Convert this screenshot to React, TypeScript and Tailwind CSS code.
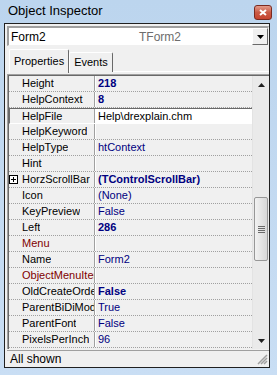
import React from "react"

type Row = {
  name: string
  value?: string
  bold?: boolean
  ref?: boolean
  selected?: boolean
  expandable?: boolean
}

const rows: Row[] = [
  { name: "Height", value: "218", bold: true },
  { name: "HelpContext", value: "8", bold: true },
  { name: "HelpFile", value: "Help\\drexplain.chm", selected: true },
  { name: "HelpKeyword" },
  { name: "HelpType", value: "htContext" },
  { name: "Hint" },
  { name: "HorzScrollBar", value: "(TControlScrollBar)", bold: true, expandable: true },
  { name: "Icon", value: "(None)" },
  { name: "KeyPreview", value: "False" },
  { name: "Left", value: "286", bold: true },
  { name: "Menu", ref: true },
  { name: "Name", value: "Form2" },
  { name: "ObjectMenuItem", ref: true },
  { name: "OldCreateOrder", value: "False", bold: true },
  { name: "ParentBiDiMode", value: "True" },
  { name: "ParentFont", value: "False" },
  { name: "PixelsPerInch", value: "96" },
]

function PropRow({ row }: { row: Row }) {
  if (row.selected) {
    return (
      <div className="flex h-[16px] border-t border-t-[#696969] border-b border-b-white border-l border-l-[#696969]">
        <div className="flex w-[85px] shrink-0 items-center overflow-hidden whitespace-nowrap border-r border-r-[#a0a0a0] pl-[12px] text-black">
          {row.name}
        </div>
        <div className="flex flex-1 items-center overflow-hidden whitespace-nowrap border-l border-l-white bg-white pl-[2px] text-black">
          {row.value}
        </div>
      </div>
    )
  }
  return (
    <div className="flex h-[16px] border-b border-dotted border-b-[#a0a0a0]">
      <div
        className={`flex w-[86px] shrink-0 items-center overflow-hidden whitespace-nowrap border-r border-r-[#a0a0a0] ${
          row.ref ? "text-[#800000]" : "text-black"
        }`}
      >
        <div className="flex w-[13px] shrink-0 items-center">
          {row.expandable && (
            <div className="flex h-[9px] w-[9px] items-center justify-center border border-black bg-white">
              <svg width="7" height="7" viewBox="0 0 7 7">
                <path d="M1 3.5h5M3.5 1v5" stroke="black" strokeWidth="1" />
              </svg>
            </div>
          )}
        </div>
        <span className="overflow-hidden">{row.name}</span>
      </div>
      <div
        className={`flex flex-1 items-center overflow-hidden whitespace-nowrap border-l border-l-white pl-[2px] text-[#000080] ${
          row.bold ? "font-bold" : ""
        }`}
      >
        {row.value}
      </div>
    </div>
  )
}

function ScrollBar() {
  return (
    <div className="flex w-[17px] shrink-0 flex-col border-l border-l-[#e3e3e3] bg-[#eaeaea]">
      <div className="flex h-[17px] items-center justify-center">
        <svg width="7" height="4" viewBox="0 0 7 4">
          <path d="M3.5 0L7 4H0z" fill="#202020" />
        </svg>
      </div>
      <div className="h-[104px]" />
      <div className="mx-[1px] flex h-[64px] items-center justify-center rounded-[2px] border border-[#979797] bg-gradient-to-r from-[#f2f2f2] to-[#d8d8d8]">
        <div className="flex flex-col gap-[1px]">
          <div className="h-[1px] w-[7px] bg-[#6a6a6a]" />
          <div className="h-[1px] w-[7px] bg-[#6a6a6a]" />
          <div className="h-[1px] w-[7px] bg-[#6a6a6a]" />
          <div className="h-[1px] w-[7px] bg-[#6a6a6a]" />
        </div>
      </div>
      <div className="flex-1" />
      <div className="flex h-[17px] items-center justify-center">
        <svg width="7" height="4" viewBox="0 0 7 4">
          <path d="M0 0H7L3.5 4z" fill="#202020" />
        </svg>
      </div>
    </div>
  )
}

export default function App() {
  return (
    <div
      className="flex h-[375px] w-[277px] flex-col bg-gradient-to-b from-[#bcd5ee] to-[#c9def4] text-[11px] leading-none"
      style={{ fontFamily: '"Liberation Sans", Arial, sans-serif' }}
    >
      {/* Title bar */}
      <div className="flex h-[23px] shrink-0 items-start justify-between pl-[8px] pr-[5px]">
        <span className="mt-[4px] text-[13px] text-black">Object Inspector</span>
        <div className="mt-[5px] flex h-[15px] w-[18px] items-center justify-center rounded-[3px] border border-[#7a2a20] bg-gradient-to-b from-[#e29a8a] via-[#c95a45] to-[#c6442f]">
          <svg width="8" height="7" viewBox="0 0 8 7">
            <path d="M1 1l6 5M7 1L1 6" stroke="white" strokeWidth="2" />
          </svg>
        </div>
      </div>

      {/* Client */}
      <div className="mb-[7px] ml-[4px] mr-[7px] flex flex-1 flex-col border border-[#202020] bg-[#f0f0f0]">
        {/* Combo box */}
        <div className="ml-[2px] mt-[2px] flex h-[20px] border-t-2 border-l-2 border-t-[#a0a0a0] border-l-[#a0a0a0] border-b border-r border-b-[#f0f0f0] border-r-[#f0f0f0] bg-white">
          <div className="flex flex-1 items-center whitespace-nowrap pl-[2px] text-[12px]">
            <span className="w-[128px] text-black">Form2</span>
            <span className="text-[#6d6d6d]">TForm2</span>
          </div>
          <div className="flex w-[16px] items-center justify-center border-t border-l border-t-white border-l-white border-b border-r border-b-[#696969] border-r-[#696969] bg-[#f0f0f0]">
            <svg width="7" height="4" viewBox="0 0 7 4">
              <path d="M0 0H7L3.5 4z" fill="black" />
            </svg>
          </div>
        </div>

        {/* Tabs */}
        <div className="ml-[4px] mt-[2px] flex h-[24px] items-end text-[11px]">
          <div className="z-10 -mb-[1px] flex h-[24px] items-center rounded-t-[2px] border-t border-l border-t-white border-l-white border-r border-r-[#696969] bg-[#f0f0f0] px-[4px] text-black">
            Properties
          </div>
          <div className="flex h-[20px] items-center rounded-t-[2px] border-t border-l border-t-white border-l-white border-r border-r-[#696969] px-[4px] text-black">
            Events
          </div>
          <div className="flex-1 border-b border-b-white" />
        </div>

        {/* Grid */}
        <div className="ml-[2px] mt-[2px] flex h-[275px] border-t border-l border-t-[#a0a0a0] border-l-[#a0a0a0]">
          <div className="flex flex-1 border-t border-l border-t-[#696969] border-l-[#696969]">
            <div className="flex flex-1 flex-col">
              {rows.map((r) => (
                <PropRow key={r.name} row={r} />
              ))}
            </div>
            <ScrollBar />
          </div>
        </div>

        {/* Status bar */}
        <div className="ml-[2px] mt-[1px] flex flex-1 items-center justify-between border-t border-t-[#a0a0a0] pl-[3px] pr-[1px]">
          <span className="text-[12px] text-black">All shown</span>
          <svg width="11" height="11" viewBox="0 0 11 11">
            <path d="M10 1L1 10M10 4L4 10M10 7L7 10" stroke="#a0a0a0" strokeWidth="1.5" />
          </svg>
        </div>
      </div>
    </div>
  )
}
